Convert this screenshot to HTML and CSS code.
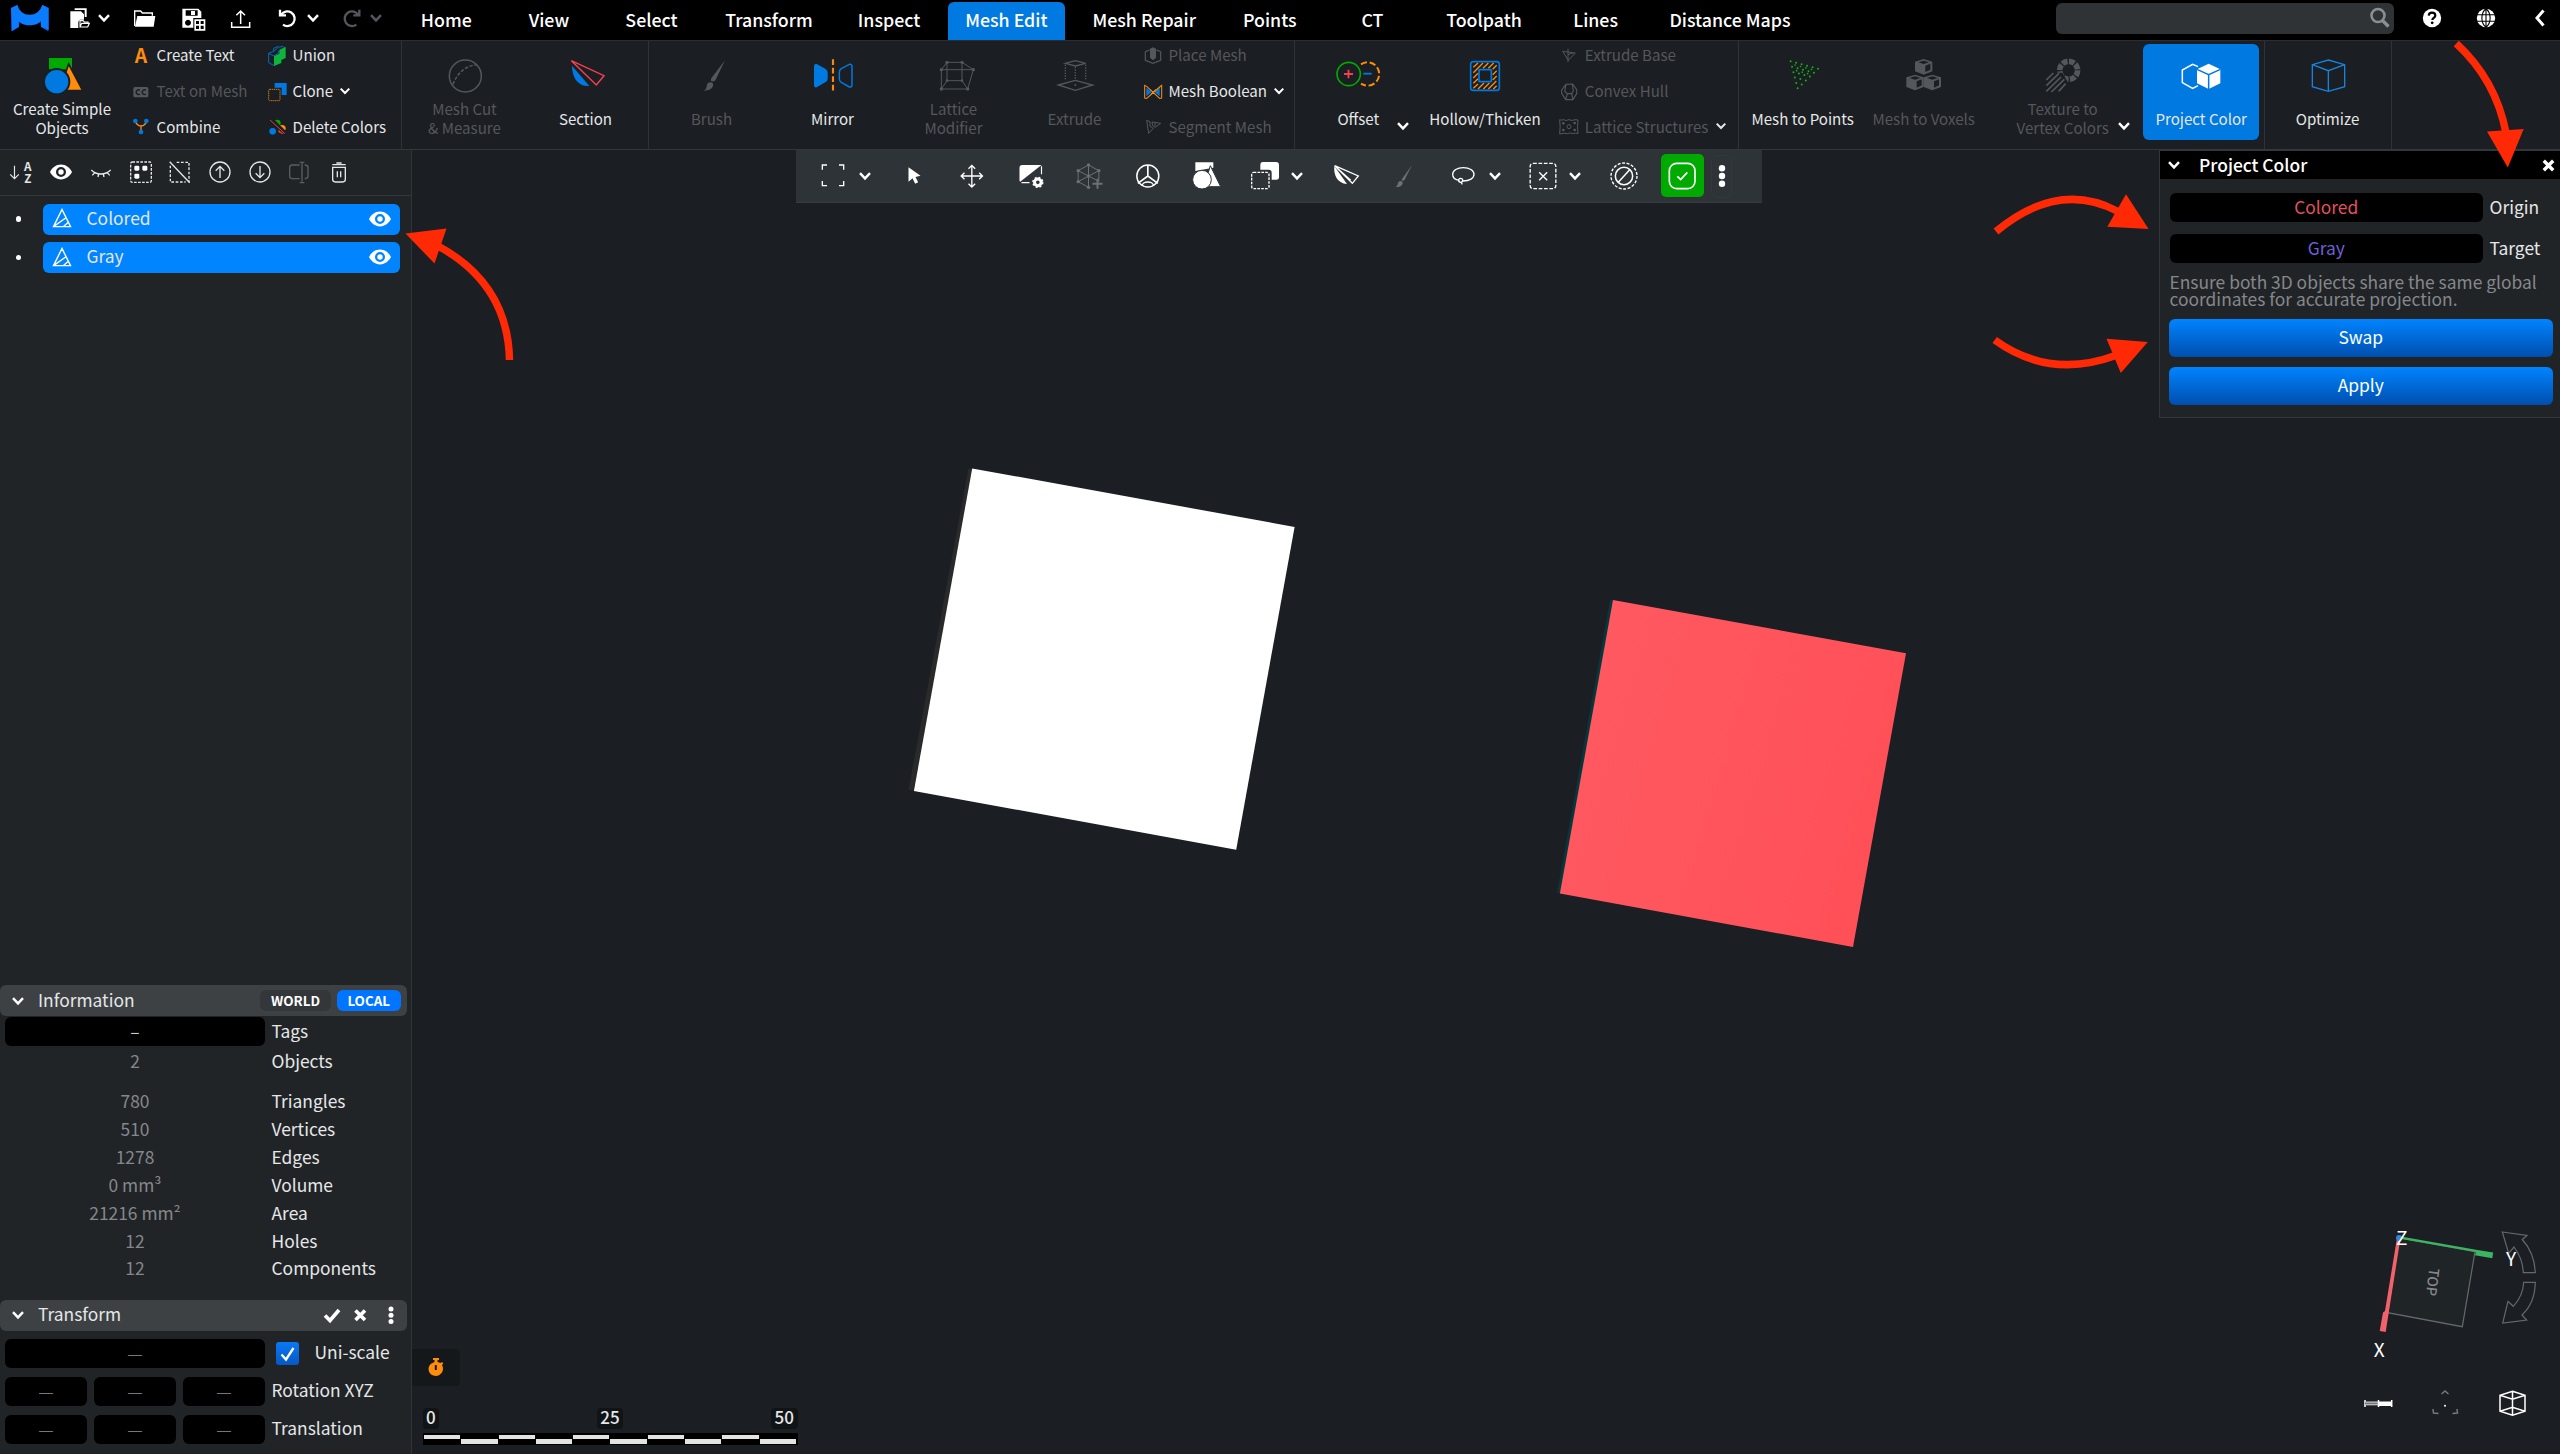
FILE: index.html
```html
<!DOCTYPE html>
<html lang="en">
<head>
<meta charset="utf-8">
<title>Project Color</title>
<link rel="stylesheet" href="styles.css">
</head>
<body>
<svg class="defs" width="0" height="0">
  <symbol id="chev" viewBox="0 0 14 14"><path d="M2 4.2 7 9.4 12 4.2" fill="none" stroke="currentColor" stroke-width="2.4"/></symbol>
  <symbol id="eye" viewBox="0 0 22 16"><path fill="currentColor" fill-rule="evenodd" d="M11 0.6C6 .6 2 4 0 8c2 4 6 7.400 11 7.400S20 12 22 8C20 4 16 .6 11 .6zM11 3a5 5 0 1 1 0 10 5 5 0 0 1 0-10z"/><circle cx="11" cy="8" r="2.700" fill="currentColor"/></symbol>
  <symbol id="mesh" viewBox="0 0 20 20"><path d="M10 1.500 1.500 18.600h17zM1.500 18.600 14 9.800M11.500 18.600l4.800-4.300" fill="none" stroke="currentColor" stroke-width="1.400"/></symbol>
</svg>

<header class="menubar">
  <div class="file-tools">
    <svg class="logo" viewBox="31 14 114 84"><path fill="#0a5bd8" d="M33 24 57 54 55 83 33 96zM143 24 119 54 121 83 143 96z"/><path fill="#0a7cff" d="M31 26 50 16C56 36 68 46 87 46S118 36 125 16L144 26V92L121 82V66C110 76 100 78 87 78S64 76 54 66V82L33 96z"/></svg>
    <div class="pair">
      <svg class="i28" viewBox="198 12 84 84"><path fill="#fff" d="M224 25h36v26h-6V30h-30zM211 34h32l9 9v16h-12l-5 6v19h-24z"/><path fill="none" stroke="#fff" stroke-width="3.500" d="M240 80V62h9l4 4h11v5M240 81l5-11h23l-5 11z"/></svg>
      <svg class="chev"><use href="#chev"/></svg>
    </div>
    <svg class="i28" viewBox="394 12 84 84"><path fill="none" stroke="#fff" stroke-width="4" d="M405 78V33h18l5 6h30v8"/><path fill="#fff" d="M413 48h54l-5 32h-56z"/></svg>
    <svg class="i28 save" viewBox="539 12 84 84"><path fill="#fff" fill-rule="evenodd" d="M546 26h48l9 9v19h-24v29h-33zM556 31v16h36V31zM572 33h12v12h-12zM563 59a9 9 0 1 0 .1 0zM582 58h33v34h-33zM587 63v9h9v-9zM601 63v9h9v-9zM587 77v10h9V77zM601 77v10h9V77z"/></svg>
    <svg class="i28" viewBox="680 12 84 84"><path fill="none" stroke="#fff" stroke-width="4.500" d="M694 66v16h54V66M721 72V34M708 46l13-13 13 13"/></svg>
    <div class="pair">
      <svg class="i28" viewBox="824 12 84 84"><path fill="none" stroke="#fff" stroke-width="7" d="M839 29v17h18M842 45a22 22 0 1 1 6 29"/></svg>
      <svg class="chev"><use href="#chev"/></svg>
    </div>
    <div class="pair off redo">
      <svg class="i28" viewBox="1015 12 84 84"><path fill="none" stroke="currentColor" stroke-width="7" d="M1082 29v17h-18M1079 45a22 22 0 1 0-6 29"/></svg>
      <svg class="chev"><use href="#chev"/></svg>
    </div>
  </div>
  <nav class="tabs">
    <a>Home</a><a>View</a><a>Select</a><a>Transform</a><a>Inspect</a><a class="on">Mesh Edit</a><a>Mesh Repair</a><a>Points</a><a>CT</a><a>Toolpath</a><a>Lines</a><a>Distance Maps</a>
  </nav>
  <div class="menu-right">
    <div class="search"><svg width="22" height="22" viewBox="0 0 22 22"><circle cx="9" cy="8.500" r="6.500" fill="none" stroke="#8b8f92" stroke-width="2.600"/><path d="m13.500 13.500 6 6" stroke="#8b8f92" stroke-width="3.400"/></svg></div>
    <svg class="help" width="20" height="20" viewBox="0 0 20 20"><circle cx="10" cy="10" r="9.200" fill="#fff"/><path d="M6.700 7.600C6.900 5.500 8.200 4.600 10 4.600s3.300 1.100 3.300 2.900c0 2.300-3 2.500-3 4.600" fill="none" stroke="#000" stroke-width="2.200"/><circle cx="10.200" cy="14.800" r="1.400"/></svg>
    <svg class="globe" width="20" height="20" viewBox="0 0 20 20"><circle cx="10" cy="10" r="9.200" fill="#fff"/><path d="M0 6.700h20M0 13.300h20M10 0v20M10 .8C4.500 5 4.500 15 10 19.200M10 .8c5.500 4.200 5.500 14.200 0 18.400" fill="none" stroke="#000" stroke-width="1.100"/></svg>
    <svg class="back" width="12" height="18" viewBox="0 0 12 18"><path d="M9.500 1.500 3 9l6.500 7.500" fill="none" stroke="#fff" stroke-width="3"/></svg>
  </div>
</header>

<section class="ribbon">
  <div class="group g1">
    <div class="big first"><svg viewBox="114 165 144 120"><path fill="#0a0" d="M147 174h69v34h-69z"/><path fill="#ff8c0a" stroke="#1b1e22" stroke-width="5" d="M206 192 248 272h-70z"/><circle cx="170" cy="245" r="38" fill="#0079e1" stroke="#1b1e22" stroke-width="6"/></svg><span>Create Simple<br>Objects</span></div>
    <div class="col">
      <div class="small"><svg viewBox="386 132 72 72"><text class="glyph-a" x="422" y="190">A</text></svg><span>Create Text</span></div>
      <div class="small off"><svg viewBox="386 237 72 72"><rect x="399" y="258" width="45" height="31" rx="5" fill="currentColor"/><path d="M419 268a7 7 0 1 0 0 11M437 268a7 7 0 1 0 0 11" fill="none" stroke="#1b1e22" stroke-width="4"/></svg><span>Text on Mesh</span></div>
      <div class="small"><svg viewBox="386 346 72 72"><path d="M406 365c2 10 8 13 16 14 8-1 14-4 16-14M422 379v18" fill="none" stroke="#f28a14" stroke-width="4"/><g fill="#0079e1"><circle cx="405" cy="364" r="7"/><circle cx="438" cy="364" r="7"/><circle cx="422" cy="397" r="7"/></g></svg><span>Combine</span></div>
    </div>
    <div class="col c2">
      <div class="small"><svg viewBox="793 132 72 72"><path d="m804 160 15-6 14-12 12-3 9 5M804 160v28l16 9M804 160l16 8 13-8V152M819 154v-9l14-6" fill="none" stroke="#0079e1" stroke-width="2.500"/><path fill="#0db53c" d="m820 169 16-8v-12l19-8v33l-13 6v9l-22 9z"/></svg><span>Union</span></div>
      <div class="small"><svg viewBox="793 237 72 72"><path fill="#0079e1" d="M822 246h36v36h-15V260h-21z"/><rect x="804" y="265" width="34" height="34" rx="3" fill="none" stroke="#f28a14" stroke-width="2.600" stroke-dasharray="4 2"/></svg><span>Clone</span><svg class="chev"><use href="#chev"/></svg></div>
      <div class="small"><svg viewBox="793 346 72 72"><circle cx="830" cy="370" r="10" fill="#0a0"/><circle cx="816" cy="395" r="10" fill="#0079e1"/><path d="M833 385a11 11 0 0 1 22 4l-8 13c-10 0-14-8-14-17z" fill="#ff8c0a"/><path d="m807 360 46 44M812 356l45 44" stroke="#1b1e22" stroke-width="7"/><path d="m808 361 45 41" stroke="#e63946" stroke-width="3"/><path d="m833 396 15 6" stroke="#e63946" stroke-width="3"/></svg><span>Delete Colors</span></div>
    </div>
  </div>
  <div class="group g2">
    <div class="big off"><svg viewBox="0 0 144 120"><circle cx="73" cy="63" r="48" fill="none" stroke="currentColor" stroke-width="4.500"/><path d="M36 88C50 50 80 30 106 30" fill="none" stroke="currentColor" stroke-width="4.500" stroke-dasharray="10 5"/></svg><span>Mesh Cut<br>&amp; Measure</span></div>
    <div class="big"><svg viewBox="0 0 144 120"><path d="M30 32C30 66 46 95 82 93z" fill="#0079e1"/><path d="m28 17 98 45-23 28z" fill="none" stroke="#f5404d" stroke-width="4.500"/></svg><span>Section</span></div>
  </div>
  <div class="group g3">
    <div class="big off"><svg viewBox="0 0 144 120"><path fill="currentColor" d="m111 16-28 58c-3 5-8 7-14 3-1-3 0-6 3-10zM67 82c7 0 10 5 8 11-3 9-12 14-29 14 9-4 9-8 10-14 1-7 5-11 11-11z"/></svg><span>Brush</span></div>
    <div class="big"><svg viewBox="57 45 144 120"><path fill="#0079e1" d="M72 79q0-9 8-7l26 14q7 4 7 12v18q0 7-7 11l-26 15q-8 3-8-7z"/><path d="M186 79q0-8-8-6l-24 13q-6 4-6 11v20q0 6 6 10l24 14q8 2 8-7z" fill="none" stroke="#0079e1" stroke-width="4.500"/><path d="M129 58v94" stroke="#f28a14" stroke-width="6.500" stroke-dasharray="17 8.500"/></svg><span>Mirror</span></div>
    <div class="big off"><svg viewBox="419 45 144 120"><path d="M470 67h45l34 22-17 58h-79V89zM453 89h96M470 67v55l-17 25M515 67v55l17 25M470 122h45" fill="none" stroke="currentColor" stroke-width="3"/><g fill="currentColor"><circle cx="470" cy="67" r="5"/><circle cx="515" cy="67" r="5"/><circle cx="549" cy="89" r="5"/><circle cx="453" cy="89" r="5"/><circle cx="453" cy="147" r="5"/><circle cx="532" cy="147" r="5"/><circle cx="470" cy="122" r="4"/><circle cx="515" cy="122" r="4"/></g></svg><span>Lattice<br>Modifier</span></div>
    <div class="big off"><svg viewBox="782 45 144 120"><path d="m825 70 30-8 31 8-31 8zM804 135l51-14 52 14-52 16z" fill="none" stroke="currentColor" stroke-width="4"/><path d="M825 74v48M855 80v40M886 74v48" stroke="currentColor" stroke-width="4" stroke-dasharray="4 4"/><circle cx="855" cy="135" r="3" fill="currentColor"/></svg><span>Extrude</span></div>
    <div class="col c3">
      <div class="small off"><svg viewBox="1052 12 72 72"><path d="m1078 30-13 5v26l23 9 23-9V35l-13-5" fill="none" stroke="currentColor" stroke-width="3.500"/><path fill="currentColor" d="m1088 22 9 4v27l-9 8-9-8V26z"/></svg><span>Place Mesh</span></div>
      <div class="small"><svg viewBox="1052 118 72 72"><path fill="#0079e1" d="m1068 141 16 13-16 13zM1108 141l-16 13 16 13z"/><path d="M1063 134v38l6 1 39-34 6-5v38l-6 1-39-36z" fill="none" stroke="#f28a14" stroke-width="3.200"/><path d="m1080 146 16 16M1096 146l-16 16" stroke="#f28a14" stroke-width="3"/></svg><span>Mesh Boolean</span><svg class="chev"><use href="#chev"/></svg></div>
      <div class="small off"><svg viewBox="1052 226 72 72"><path d="m1069 242 10 4v14l10 6-14 15zM1085 247l26 4-17 12-7-5zM1094 249v10" fill="none" stroke="currentColor" stroke-width="3"/></svg><span>Segment Mesh</span></div>
    </div>
  </div>
  <div class="group g4">
    <div class="big"><svg viewBox="133 45 144 120"><circle cx="177" cy="102" r="35" fill="none" stroke="#0a0" stroke-width="5"/><path d="M214 73a35 35 0 1 1 0 58" fill="none" stroke="#ff8c0a" stroke-width="6" stroke-dasharray="19 8"/><path d="M163 102h27M176.500 89v26" stroke="#f5404d" stroke-width="5.500"/><path d="M221 101h25" stroke="#0079e1" stroke-width="5.500"/></svg><span>Offset</span><svg class="chev"><use href="#chev"/></svg></div>
    <div class="big hollow"><svg viewBox="513 45 144 120"><path d="m550 82 14-13M550 98l29-29M550 114l14-14M550 130l14-14M550 145l14-13M564 147l18-18M580 147l18-18M595 147l24-24M610 147l10-10M579 85l16-16M595 85l16-16M608 88l12-12M608 104l12-12M608 120l12-12" stroke="#ff8c0a" stroke-width="4"/><rect x="542" y="65" width="86" height="86" rx="8" fill="none" stroke="#0079e1" stroke-width="5"/><rect x="567" y="89" width="37" height="36" rx="2" fill="#1b1e22" stroke="#0079e1" stroke-width="5"/></svg><span>Hollow/Thicken</span></div>
    <div class="col c4">
      <div class="small off"><svg viewBox="800 12 72 72"><path d="m817 34 38 5-21 22zM833 26v18l16-6M833 44v22" fill="none" stroke="currentColor" stroke-width="3"/></svg><span>Extrude Base</span></div>
      <div class="small off"><svg viewBox="800 118 72 72"><path d="m827 131 20-1 12 17v12l-11 18h-22l-12-19v-10zM827 131l-4 21 8 7h13l5-8-3-20M831 159l-5 18M844 159l4 18" fill="none" stroke="currentColor" stroke-width="3.400"/></svg><span>Convex Hull</span></div>
      <div class="small off"><svg viewBox="800 226 72 72"><path d="M808 240q6 3 10 0 10 5 18 0 10 5 18 0l9 1q-3 20 0 41-8-3-14 0-10-4-18 0-10-3-23 1 3-22 0-43z" fill="none" stroke="currentColor" stroke-width="3"/><circle cx="836" cy="261" r="6" fill="none" stroke="currentColor" stroke-width="3"/><g fill="currentColor"><circle cx="819" cy="251" r="4"/><circle cx="853" cy="250" r="4"/><circle cx="819" cy="271" r="4"/><circle cx="853" cy="271" r="4"/></g></svg><span>Lattice Structures</span><svg class="chev lit"><use href="#chev"/></svg></div>
    </div>
  </div>
  <div class="group g5">
    <div class="big"><svg viewBox="0 0 144 120"><g stroke="#12b312" stroke-width="6" stroke-linecap="round" stroke-dasharray="0 17"><path d="m35 19 84 22.600"/><path d="m39.200 35.200 67 18.100"/><path d="m43.400 51.400 50.500 13.600"/><path d="m47.600 67.600 34 9.200"/><path d="m51.800 83.800 17 4.600"/><path d="m56 100 1 .3"/></g><g stroke="#12b312" stroke-width="5" stroke-linecap="round" stroke-dasharray="0 17"><path d="m48 30 54 14.500"/><path d="m53 47 38 10.200"/></g></svg><span>Mesh to Points</span></div>
    <div class="big off"><svg viewBox="152 165 144 120"><g id="vox"><path fill="currentColor" d="m223 177 26 8v29l-26 10-26-10v-29z"/><path fill="#1b1e22" d="m223 182 16 5-16 5-16-5zM228 197l15-6v18l-15 7z"/></g><use href="#vox" x="-26" y="47"/><use href="#vox" x="26" y="47"/></svg><span>Mesh to Voxels</span></div>
    <div class="big off tex"><svg viewBox="570 165 144 120"><circle cx="659" cy="211" r="27" fill="none" stroke="currentColor" stroke-width="17" stroke-dasharray="17.200 4"/><path d="M600 218h40l20 34v26h-60z" fill="#1b1e22"/><path d="m592 240 21-21M592 257l38-37M592 274l44-43M607 276l39-38M629 274l21-23" stroke="currentColor" stroke-width="5"/></svg><span>Texture to<br>Vertex Colors</span><svg class="chev"><use href="#chev"/></svg></div>
    <div class="big active"><svg viewBox="983 165 144 120"><path d="m1046 200-16-7-31 17v38l31 17 16-8" fill="none" stroke="#fff" stroke-width="4.500"/><path fill="#fff" d="m1078 191 35 17v42l-35 17-35-17v-42z"/><path d="m1043 208 35 16 35-16M1078 224v43" fill="none" stroke="#0079e1" stroke-width="4.500"/></svg><span>Project Color</span></div>
  </div>
  <div class="group g6">
    <div class="big"><svg viewBox="1361 165 144 120"><path d="m1434 180 49 14v66l-49 14-48-14v-66zM1386 194l48 18 49-18M1434 212v62" fill="none" stroke="#1583e0" stroke-width="4"/></svg><span>Optimize</span></div>
  </div>
</section>

<main class="work">
  <aside class="sidebar">
    <div class="tree-tools">
      <svg class="i28" viewBox="22.500 474 84 84"><path d="M45 497v38M32 523l13 13 13-13" fill="none" stroke="#e4e6e8" stroke-width="3.500"/><text class="glyph-az" x="85" y="512">A</text><text class="glyph-az" x="85" y="548">Z</text></svg>
      <svg class="eye"><use href="#eye"/></svg>
      <svg class="i28" viewBox="261 474 84 84"><path d="M274 510c15 16 42 16 58 0M284 518l-7 8M296 522l-2 9M310 522l2 9M322 518l7 8" fill="none" stroke="#e4e6e8" stroke-width="4"/></svg>
      <svg class="i28" viewBox="378 474 84 84"><rect x="389" y="486" width="62" height="61" rx="5" fill="none" stroke="#e4e6e8" stroke-width="4" stroke-dasharray="8 4"/><g fill="#fff"><rect x="400" y="497" width="15" height="15" rx="4"/><rect x="424" y="497" width="15" height="15" rx="4"/><rect x="400" y="521" width="15" height="15" rx="4"/></g></svg>
      <svg class="i28" viewBox="498 474 84 84"><path d="M530 487h37v60M511 497v49h46" fill="none" stroke="#e4e6e8" stroke-width="4" stroke-dasharray="8 5"/><path d="m509 485 60 63" stroke="#e4e6e8" stroke-width="4"/></svg>
      <svg class="i28" viewBox="616 474 84 84"><circle cx="658" cy="516" r="30" fill="none" stroke="#e4e6e8" stroke-width="4"/><path d="M658 534v-34M645 512l13-13 13 13" fill="none" stroke="#e4e6e8" stroke-width="4"/></svg>
      <svg class="i28" viewBox="735 474 84 84"><circle cx="777" cy="516" r="30" fill="none" stroke="#e4e6e8" stroke-width="4"/><path d="M777 498v34M764 520l13 13 13-13" fill="none" stroke="#e4e6e8" stroke-width="4"/></svg>
      <svg class="i28 off" viewBox="855 474 84 84"><path d="M899 495h-22q-8 0-8 8v25q0 8 8 8h22M914 495q10 0 10 8v25q0 8-10 8M906 489v56M899 487h14M899 548h14" fill="none" stroke="currentColor" stroke-width="4"/></svg>
      <svg class="i28" viewBox="973 474 84 84"><path d="M996 502h38v36q0 8-8 8h-22q-8 0-8-8zM995 494h40M1007 489h16M1010 514v18M1020 514v18" fill="none" stroke="#e4e6e8" stroke-width="4"/></svg>
    </div>
    <div class="tree">
      <div class="node"><i></i><div class="pill"><svg class="mesh"><use href="#mesh"/></svg><span>Colored</span><svg class="eye"><use href="#eye"/></svg></div></div>
      <div class="node"><i></i><div class="pill"><svg class="mesh"><use href="#mesh"/></svg><span>Gray</span><svg class="eye"><use href="#eye"/></svg></div></div>
    </div>
    <div class="panel-head"><svg class="chev"><use href="#chev"/></svg><span>Information</span><b>WORLD</b><b class="on">LOCAL</b></div>
    <div class="info">
      <div class="row tags"><em class="field">–</em><span>Tags</span></div>
      <div class="row objs"><em>2</em><span>Objects</span></div>
      <div class="row"><em>780</em><span>Triangles</span></div>
      <div class="row"><em>510</em><span>Vertices</span></div>
      <div class="row"><em>1278</em><span>Edges</span></div>
      <div class="row"><em>0 mm³</em><span>Volume</span></div>
      <div class="row"><em>21216 mm²</em><span>Area</span></div>
      <div class="row"><em>12</em><span>Holes</span></div>
      <div class="row"><em>12</em><span>Components</span></div>
    </div>
    <div class="panel-head"><svg class="chev"><use href="#chev"/></svg><span>Transform</span>
      <svg class="act" width="88" height="20" viewBox="0 0 88 20"><path d="m2 10.500 5 5L16 5" fill="none" stroke="#fff" stroke-width="3.600"/><path d="m32.500 5.500 9.500 9.500M42 5.500 32.500 15" stroke="#fff" stroke-width="3.600"/><g fill="#fff"><circle cx="68" cy="4" r="2.500"/><circle cx="68" cy="10.200" r="2.500"/><circle cx="68" cy="16.400" r="2.500"/></g></svg>
    </div>
    <div class="xform">
      <div class="line"><div class="fields"><em>—</em></div><svg class="check" width="23" height="23" viewBox="0 0 23 23"><path d="m5.500 12.500 4.500 5 7.500-11.500" fill="none" stroke="#fff" stroke-width="2.300"/></svg><span>Uni-scale</span></div>
      <div class="line"><div class="fields"><em>—</em><em>—</em><em>—</em></div><span>Rotation XYZ</span></div>
      <div class="line"><div class="fields"><em>—</em><em>—</em><em>—</em></div><span>Translation</span></div>
    </div>
  </aside>

  <section class="viewport">
    <svg class="scene" viewBox="412 150 2148 1304">
      <defs><linearGradient id="r" x1="0" x2="1" y1="0" y2=".3"><stop offset="0" stop-color="#ff5a62"/><stop offset="1" stop-color="#ff5058"/></linearGradient></defs>
      <path d="m971 469-60 321" stroke="#2b2a2b" stroke-width="5"/>
      <path fill="#fff" d="m972.200 468.400 322.400 58.500-58.400 322.800-322.300-58.800z"/>
      <path d="m1612 600-53 293" stroke="#07363b" stroke-width="4"/>
      <path fill="url(#r)" d="m1613 599.900 293 53.400-53 293.700-293.100-53.400z"/>
      <g fill="none" stroke="#66696c" stroke-width="1.200">
        <path fill="#1f2426" d="M2399.300 1237.700 2475 1251.700 2462.300 1326.700 2387.700 1312.700z"/>
        <path d="M2502.300 1232 2527 1235.300 2522.300 1239.500Q2534.500 1253 2535.300 1272.700H2523.300Q2523 1259 2514 1247 L2508.700 1253.300z"/>
        <path d="M2523.700 1282.300h11.600Q2535 1303 2522 1315L2526.700 1320 2502.700 1323 2508 1301.300 2513.300 1306.300Q2523 1296 2523.700 1282.300z"/>
      </g>
      <path fill="#3cb562" d="M2401 1236.500 2476 1249.700 2493.200 1252.500 2492.300 1258.300 2475 1255.300 2476 1252 2401 1239z"/>
      <path fill="#f2626a" d="M2397 1238h3.500L2388.700 1312.700 2385.700 1332 2379.700 1331 2383 1312.500 2385 1311z"/>
      <circle cx="2399" cy="1238" r="3" fill="#2f86e0"/>
      <text class="axis" x="2401.700" y="1245">Z</text><text class="axis" x="2511" y="1265.500">Y</text><text class="axis" x="2379.300" y="1357">X</text>
      <text class="face" transform="translate(2427.500 1281.500) rotate(97)">TOP</text>
      <path d="M2365 1400v7M2378.500 1400v7M2391.700 1400v7" stroke="#fff" stroke-width="1.500"/><path d="M2365 1402h13v2.800h-13" fill="#777" stroke="#ddd" stroke-width="1"/><path d="M2378.500 1401.500h13v4.500h-13z" fill="#fff"/>
      <path d="m2441.500 1394 3.500-3 3.500 3M2433 1409l.5 4 5 .5M2457 1409l.5 4-5 .5" fill="none" stroke="#77797c" stroke-width="1.500"/><circle cx="2445" cy="1405.700" r="1" fill="#fff"/>
      <path d="m2512.500 1391.300 12.500 4v16l-12.500 4-12.500-4v-16zM2500 1395.300l12.500 4 12.500-4M2500 1411.300l12.500-4 12.500 4M2512.500 1391v24.500" fill="none" stroke="#fff" stroke-width="1.500"/>
    </svg>

    <div class="toolbar">
      <svg class="i28 menu" viewBox="88 365 84 84"><path d="M98 388v-14h14M148 374h14v14M162 422v14h-14M112 436H98v-14" fill="none" stroke="#fff" stroke-width="4"/></svg><svg class="chev"><use href="#chev"/></svg>
      <svg class="i28" viewBox="331.500 363 84 84"><path fill="#fff" d="m357 379 36 25-15 4 8 16-9 4-8-16-12 10z"/></svg>
      <svg class="i28" viewBox="505.500 365 84 84"><path d="M547 375v64M515 407h64M537 385l10-10 10 10M537 430l10 10 10-10M525 397l-10 10 10 10M569 397l10 10-10 10" fill="none" stroke="#fff" stroke-width="4"/></svg>
      <svg class="i28" viewBox="682.500 365 84 84"><path fill="#fff" d="M690 382q0-8 8-8h58l-64 50-2-3z"/><path d="M756 378v24M696 427h24" stroke="#fff" stroke-width="3.500"/><circle cx="745" cy="426" r="10" fill="none" stroke="#fff" stroke-width="9"/><circle cx="745" cy="426" r="15" fill="none" stroke="#fff" stroke-width="4" stroke-dasharray="6 5.800"/></svg>
      <svg class="i28 off2" viewBox="858.500 365 84 84"><path d="m899 374 31 17v32M899 374l-31 17v33l31 17M899 374v67M868 391l62 32M930 391l-62 33" fill="none" stroke="currentColor" stroke-width="3"/><g fill="currentColor"><circle cx="899" cy="374" r="5"/><circle cx="930" cy="391" r="5"/><circle cx="868" cy="391" r="5"/><circle cx="868" cy="424" r="5"/><circle cx="899" cy="441" r="5"/><circle cx="899" cy="407" r="5"/></g><path d="M926 415v30M911 430h30" stroke="currentColor" stroke-width="6"/></svg>
      <svg class="i28" viewBox="1031.500 365 84 84"><circle cx="1073" cy="407" r="33" fill="none" stroke="#fff" stroke-width="4.500"/><path d="M1073 374v33l-30 22M1073 407l30 22" fill="none" stroke="#fff" stroke-width="5"/><path d="M1056 436a17 11 0 0 1 34 0" fill="none" stroke="#fff" stroke-width="4"/></svg>
      <svg class="i28" viewBox="1208 365 84 84"><path fill="#fff" d="M1218 366h54v16l-54 10z"/><path fill="#fff" stroke="#2e3339" stroke-width="3" d="m1263 376 31 63h-50z"/><circle cx="1238" cy="418" r="28" fill="#fff" stroke="#2e3339" stroke-width="3"/></svg>
      <svg class="i28 menu" viewBox="1386 365 84 84"><path fill="#fff" d="M1414 374q0-9 8-9h39q9 0 9 9v36q0 8-8 8h-14v-21q0-9-9-9h-25z"/><rect x="1388" y="396" width="52" height="49" rx="6" fill="none" stroke="#fff" stroke-width="4" stroke-dasharray="8 3.500"/></svg><svg class="chev"><use href="#chev"/></svg>
      <svg class="i28" viewBox="129 365 84 84"><path fill="#fff" d="M136 377c-3 26 8 52 38 54z"/><path d="m137 376 71 31-18 22zM137 376l48 44" fill="none" stroke="#fff" stroke-width="4"/></svg>
      <svg class="i28 off2" viewBox="306 365 84 84"><path fill="currentColor" d="m372 374-23 46q-4 3-9-1zM337 422c6 0 8 4 7 8-3 7-10 11-22 10 6-3 6-5 7-9 1-5 4-8 8-9z"/></svg>
      <svg class="i28 menu" viewBox="477 365 84 84"><path d="M508 420c-14-1-20-9-20-18 0-12 14-20 32-20s32 8 32 20-13 20-33 20M517 432q-3-5-5-7" fill="none" stroke="#fff" stroke-width="4"/><circle cx="512" cy="420" r="6" fill="none" stroke="#fff" stroke-width="4"/></svg><svg class="chev"><use href="#chev"/></svg>
      <svg class="i28 menu" viewBox="718.500 365 84 84"><rect x="722" y="369" width="77" height="76" rx="9" fill="none" stroke="#fff" stroke-width="4" stroke-dasharray="11 5"/><path d="m749 396 24 24M773 396l-24 24" stroke="#fff" stroke-width="4"/></svg><svg class="chev"><use href="#chev"/></svg>
      <svg class="i28 nosel" viewBox="960 365 84 84"><circle cx="1002" cy="407" r="39" fill="none" stroke="#fff" stroke-width="4" stroke-dasharray="9 4.600"/><circle cx="1002" cy="407" r="26" fill="none" stroke="#fff" stroke-width="4.500"/><path d="m985 426 34-38" stroke="#fff" stroke-width="4.500"/></svg>
      <div class="confirm"><svg width="28" height="28" viewBox="1135 365 84 84"><rect x="1139" y="369" width="77" height="76" rx="22" fill="none" stroke="#fff" stroke-width="5"/><path d="m1163 408 10 10 20-22" fill="none" stroke="#fff" stroke-width="5"/></svg></div>
      <div class="more"><svg width="8" height="24" viewBox="0 0 8 24"><g fill="#fff"><circle cx="4" cy="4.200" r="3.200"/><circle cx="4" cy="12" r="3.200"/><circle cx="4" cy="19.800" r="3.200"/></g></svg></div>
    </div>

    <div class="dialog">
      <div class="dialog-head"><svg class="chev"><use href="#chev"/></svg><span>Project Color</span><svg width="13" height="13" viewBox="0 0 13 13"><path d="m1.800 1.800 9.400 9.400M11.200 1.800l-9.400 9.400" stroke="#fff" stroke-width="3.400"/></svg></div>
      <div class="pick"><em class="origin">Colored</em><span>Origin</span></div>
      <div class="pick"><em class="target">Gray</em><span>Target</span></div>
      <p>Ensure both 3D objects share the same global<br>coordinates for accurate projection.</p>
      <button>Swap</button>
      <button>Apply</button>
    </div>

    <div class="timer"><svg width="16" height="19" viewBox="0 0 16 19"><path fill="#ff8c0a" d="M5 0h6v2H9.500v2l3 1 1.500-1 1.300 1.500L14 7c3 5-1 11-6.200 11C1 18-2 10 3 5.800L6.500 4V2H5z"/><path d="M7.800 7v5" stroke="#15181a" stroke-width="2"/></svg></div>

    <div class="scale">
      <div class="ticks"><span>0</span><span>25</span><span>50</span></div>
      <div class="bar"><i></i><i></i><i></i><i></i><i></i><i></i><i></i><i></i><i></i><i></i></div>
    </div>
  </section>
</main>

<svg class="callouts" viewBox="0 0 2560 1454">
  <g fill="none" stroke="#ff2a05" stroke-width="7.500"><path d="M438 246Q508 284 509.500 360"/><path d="M2456.300 43.500Q2496 80 2506 133"/><path d="M1996 231.500Q2058 180 2117 211"/><path d="M1994.700 340Q2050 380 2117 355"/></g>
  <g fill="#ff2a05"><path d="m405.500 233.500 41-5-12 35z"/><path d="m2507.800 167.500-20.800-36 36.700-2.500z"/><path d="m2148.600 229-22.600-34.700-18.700 32.400z"/><path d="m2147.800 342-41.300-3.300 14.300 34.300z"/></g>
</svg>
</body>
</html>
```
FILE: styles.css
```css
* { box-sizing: border-box; }
body {
  margin: 0;
  width: 2560px;
  height: 1454px;
  overflow: hidden;
  position: relative;
  display: flex;
  flex-direction: column;
  background: #1b1e23;
  color: #e6e7e8;
  font: 400 17.4px/28px "Noto Sans CJK SC", "Noto Sans", sans-serif;
}
svg { display: block; flex: none; overflow: visible; }
em, i { font-style: normal; }
.defs { position: absolute; }
.i28 { width: 28px; height: 28px; }
.chev { width: 14px; height: 14px; color: #fff; }
.eye { width: 22px; height: 16px; color: #fff; }
.off { color: #54575b; }
.off .chev { color: inherit; }
.off2 { color: #6d7074; }

/* menu bar */
.menubar {
  height: 41px;
  background: #000;
  border-bottom: 1px solid #2b2e31;
  display: flex;
  flex: none;
}
.file-tools {
  width: 400.500px;
  height: 36px;
  padding-left: 10.500px;
  display: flex;
  align-items: center;
  gap: 19.500px;
}
.logo { width: 38px; height: 28px; margin: 0 -2.500px 0 0; }
.pair { display: flex; align-items: center; gap: 3.800px; }
.save { margin-left: 1.300px; }
.redo { margin-left: -3px; }
.off.pair .chev { color: #54575b; }
.tabs { display: flex; gap: 11px; padding-top: 2px; flex: 1; }
.tabs a {
  min-width: 91.600px;
  height: 38px;
  padding: 0 17px;
  border-radius: 6px 6px 0 0;
  color: #fff;
  font-size: 17.800px;
  font-weight: 500;
  line-height: 35px;
  text-align: center;
  white-space: nowrap;
}
.tabs .on { background: #0079e1; }
.menu-right { display: flex; align-items: center; height: 36px; padding-right: 14.500px; }
.search {
  width: 338px;
  height: 31px;
  padding-right: 3px;
  border-radius: 6px;
  background: #2f3336;
  display: flex;
  align-items: center;
  justify-content: flex-end;
}
.help { margin-left: 28px; }
.globe { margin-left: 34.500px; }
.back { margin-left: 37.500px; }

/* ribbon */
.ribbon {
  height: 109px;
  border-bottom: 1px solid #33373a;
  background: #1b1e22;
  display: flex;
  flex: none;
}
.group { display: flex; border-right: 1px solid #2f3337; }
.g1 { width: 401.500px; }
.g2 { width: 247.500px; padding-left: 2.500px; }
.g3 { width: 645.500px; padding-left: 2px; }
.g4 { width: 444px; padding-left: 3.300px; }
.g5 { width: 526.500px; padding-left: 3.700px; }
.g6 { width: 126.500px; padding-left: 2px; }
.big {
  position: relative;
  width: 121px;
  height: 109px;
  padding-top: 14px;
  display: flex;
  flex-direction: column;
  flex: none;
  align-items: center;
  font-size: 15.100px;
  line-height: 18.700px;
  text-align: center;
  white-space: nowrap;
}
.big > svg:first-child { width: 48px; height: 40px; }
.big span { height: 40px; margin-top: 3px; display: flex; align-items: center; }
.big .chev { position: absolute; right: 9px; top: 78px; color: #fff; }
.first { width: 124px; }
.hollow { margin-left: 5.700px; }
.tex { margin-left: 18px; }
.tex .chev { right: -8px; }
.active {
  width: 116px;
  height: 96px;
  margin: 3px 0 0 20px;
  padding-top: 11px;
  border-radius: 6px;
  background: #0079e1;
}
.col { display: flex; flex-direction: column; height: 107px; margin: -3px 0 0 4.600px; width: 136px; }
.c2 { margin-left: 0; }
.c3 { margin-left: 5.500px; }
.c4 { margin-left: 11.300px; width: 180px; }
.small {
  flex: 1;
  display: flex;
  align-items: center;
  gap: 4px;
  font-size: 15.100px;
  white-space: nowrap;
}
.small span { margin-top: -3px; }
.small > svg:first-child { width: 24px; height: 24px; }
.small .chev { width: 12px; height: 12px; margin: -2px 0 0 2px; }
.small .lit { color: #e6e7e8; margin-left: 3px; }
.glyph-a { font: 700 58px "Noto Sans CJK SC", sans-serif; fill: #ff8c0a; text-anchor: middle; }

/* sidebar */
.work { display: flex; flex: 1; min-height: 0; }
.sidebar {
  width: 412px;
  border-right: 1px solid #303437;
  background: #212427;
  display: flex;
  flex-direction: column;
  flex: none;
}
.tree-tools {
  height: 46px;
  padding: 0 0 2px 1.600px;
  border-bottom: 1px solid #34383b;
  display: grid;
  grid-template-columns: repeat(9, 39.700px);
  place-items: center;
  flex: none;
}
.tree-tools .off { color: #5a5d60; }
.glyph-az { font: 700 35px "Noto Sans CJK SC", sans-serif; fill: #e4e6e8; text-anchor: middle; }
.tree { flex: 1; padding-top: 7.500px; display: flex; flex-direction: column; gap: 7.600px; }
.node { display: flex; align-items: center; height: 31px; }
.node i { width: 5.500px; height: 5.500px; border-radius: 50%; background: #fff; margin: 0 22px 0 15.500px; }
.pill {
  width: 356.500px;
  height: 31px;
  padding: 0 9px 0 9px;
  border-radius: 6px;
  background: #0084ff;
  display: flex;
  align-items: center;
}
.mesh { width: 20px; height: 20px; color: #fff; margin-top: -2px; }
.pill .eye { margin-top: -1px; }
.pill span { flex: 1; margin: -3px 0 0 14.500px; }
.panel-head {
  width: 407px;
  height: 31px;
  padding: 0 6.300px 0 11px;
  border-radius: 6px;
  background: #3d4144;
  display: flex;
  align-items: center;
  flex: none;
}
.panel-head span { flex: 1; margin: -2px 0 0 13px; }
.panel-head b {
  width: 71px;
  height: 21px;
  margin-left: 5.700px;
  border-radius: 6px;
  background: #33373a;
  color: #fff;
  font-size: 13.400px;
  line-height: 20px;
  text-align: center;
}
.panel-head .on { width: 64px; background: #0075ff; }
.act { margin-right: -10.500px; }
.info { height: 283.500px; flex: none; }
.row { height: 27.850px; display: flex; align-items: center; }
.row em { width: 260px; margin: -2px 6.500px 0 5px; text-align: center; color: #85888b; }
.row span { margin-top: -2px; }
.row .field { height: 29px; margin-top: 0; line-height: 27px; border-radius: 6px; background: #000; color: #ccc; }
.tags { height: 31px; }
.objs { height: 29px; margin-bottom: 12.500px; }
.xform { height: 123.500px; padding-top: 8px; display: flex; flex-direction: column; gap: 9.300px; flex: none; }
.line { height: 29px; display: flex; align-items: center; }
.line span { margin-top: -3px; }
.fields { width: 260px; height: 29px; margin: 0 6.500px 0 5px; display: flex; gap: 7px; }
.fields em {
  flex: 1;
  border-radius: 6px;
  background: #000;
  color: #75787b;
  line-height: 27px;
  text-align: center;
}
.check { margin: 0 15.500px 0 4.500px; border-radius: 3px; background: linear-gradient(#0a78f5, #0558c4); }

/* viewport */
.viewport { position: relative; flex: 1; background: #1b1e23; }
.scene { position: absolute; left: 0; top: 0; width: 2148px; height: 1304px; }
.axis { font: 400 19px "Noto Sans CJK SC", sans-serif; fill: #fff; text-anchor: middle; }
.face { font: 500 14px "Noto Sans CJK SC", sans-serif; fill: #84878a; text-anchor: middle; }
.toolbar {
  position: absolute;
  left: 384px;
  top: 0;
  width: 966px;
  height: 53px;
  padding-left: 23.300px;
  border-bottom: 1px solid #383c40;
  background: #2e3338;
  display: flex;
  align-items: center;
}
.toolbar .i28 { margin-right: 30.500px; }
.toolbar .menu { margin-right: 11px; }
.toolbar .chev { margin-right: 27.700px; }
.toolbar .nosel { margin-right: 22.500px; }
.confirm { width: 43px; height: 43px; border-radius: 5px; background: #0a0; display: grid; place-items: center; margin-top: -1px; }
.more { width: 21px; height: 43px; margin-left: 7.500px; border: 1px solid #34383c; border-radius: 6px; display: grid; place-items: center; }

.dialog {
  position: absolute;
  right: 0;
  top: 0;
  width: 401px;
  height: 268px;
  border: 1px solid #33373a;
  border-right: 0;
  background: #212427;
  display: flex;
  flex-direction: column;
}
.dialog-head {
  height: 28px;
  margin-bottom: 14px;
  padding: 0 5px 0 7px;
  background: #000;
  color: #fff;
  font-weight: 500;
  display: flex;
  align-items: center;
  flex: none;
}
.dialog-head span { flex: 1; margin: -1px 0 0 18px; }
.pick { height: 29px; margin: 0 0 12px 9.500px; display: flex; align-items: center; flex: none; }
.pick em { width: 313.500px; height: 29px; line-height: 27px; margin-right: 6.500px; border-radius: 6px; background: #000; text-align: center; }
.pick span { margin-top: -2px; }
.origin { color: #e0525c; }
.target { color: #6f5fd6; }
.dialog p { margin: -2px 0 0 9.500px; height: 46.300px; line-height: 17.400px; color: #85888b; white-space: nowrap; flex: none; }
.dialog button {
  width: 383.500px;
  height: 38px;
  margin: 0 0 10px 9px;
  padding: 0 0 3px;
  border: 0;
  border-radius: 6px;
  background: linear-gradient(#0084ff, #004fae);
  color: #fff;
  font: inherit;
  flex: none;
}
.timer { position: absolute; left: 0; top: 1199px; width: 48px; height: 37px; border-radius: 0 4px 4px 0; background: #15181a; display: grid; place-items: center; }
.scale { position: absolute; left: 10.500px; top: 1258px; width: 375px; }
.ticks { display: grid; grid-template-columns: 1fr auto 1fr; height: 25px; }
.ticks span { height: 21px; padding: 0 3.500px; border-radius: 4px; background: #111417; font-weight: 500; font-size: 17px; line-height: 18px; justify-self: start; }
.ticks span:last-child { justify-self: end; }
.bar { height: 12px; padding: 1.500px; background: #000; display: flex; gap: 1px; }
.bar i { flex: 1; height: 4.500px; background: #e2e3e3; }
.bar i:nth-child(even) { align-self: flex-end; }

.callouts { position: absolute; left: 0; top: 0; width: 2560px; height: 1454px; pointer-events: none; }
```
